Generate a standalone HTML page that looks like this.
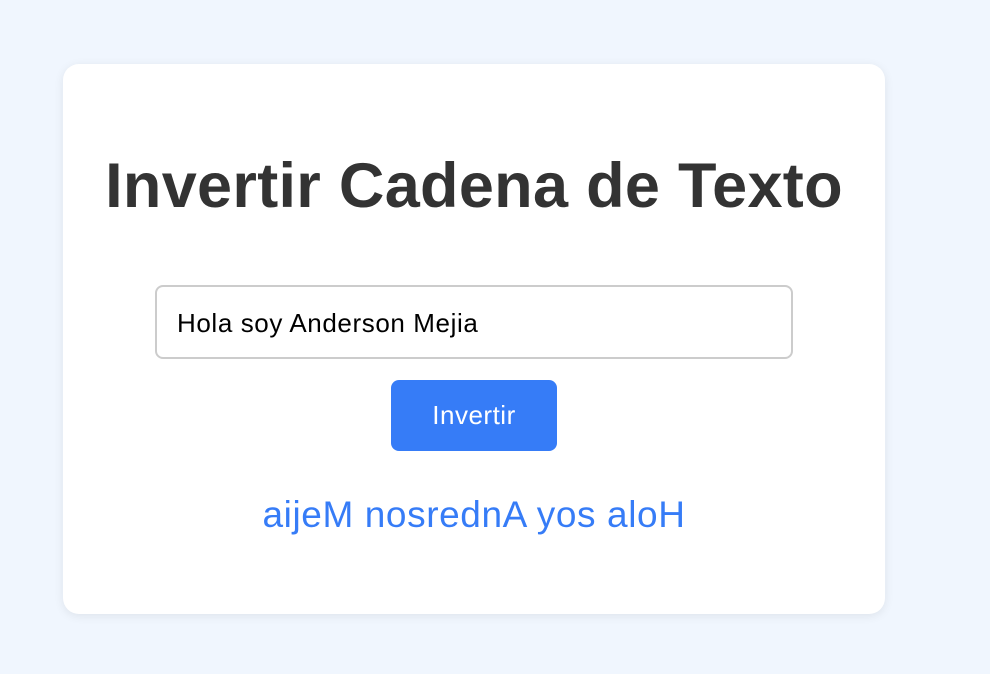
<!DOCTYPE html>
<html><head><style>
html,body{margin:0;padding:0;}
body{width:990px;height:674px;background:#f0f6fe;font-family:"Liberation Sans",Arial,sans-serif;position:relative;overflow:hidden;}
.card{position:absolute;left:63px;top:64px;width:822px;height:550px;background:#fff;border-radius:16px;box-shadow:0 2px 10px rgba(0,0,0,0.08);}
h1{position:absolute;left:0;width:948px;top:148px;margin:0;text-align:center;font-size:63px;font-weight:bold;color:#333;line-height:76px;letter-spacing:0.3px;}
.inp{position:absolute;left:155px;top:285px;border:2px solid #ccc;border-radius:8px;box-sizing:border-box;width:638px;height:74px;font-size:26px;line-height:72px;padding-left:20px;color:#000;letter-spacing:0.6px;}
.btn{position:absolute;left:391px;top:380px;width:166px;height:71px;background:#367cf7;border-radius:8px;color:#fff;font-size:26px;line-height:71px;text-align:center;letter-spacing:0.5px;}
.res{position:absolute;left:0;width:948px;top:492px;text-align:center;color:#367cf7;font-size:37px;line-height:46px;letter-spacing:0.6px;}
</style></head><body>
<div class="card"></div>
<h1>Invertir Cadena de Texto</h1>
<div class="inp">Hola soy Anderson Mejia</div>
<div class="btn">Invertir</div>
<div class="res">aijeM nosrednA yos aloH</div>
</body></html>
